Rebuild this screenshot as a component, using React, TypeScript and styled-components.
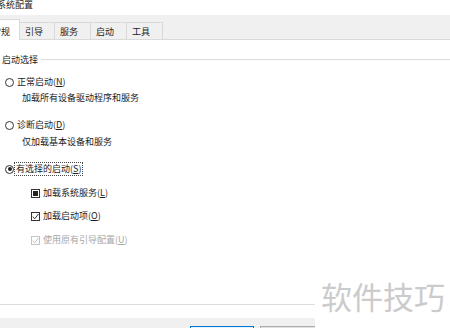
import React from "react";
import styled, { createGlobalStyle } from "styled-components";

const GlobalStyle = createGlobalStyle`
  html, body {
    margin: 0;
    padding: 0;
    background: #fff;
  }
  body {
    overflow: hidden;
    font-family: "Noto Sans CJK SC", "Noto Sans", sans-serif;
  }
`;

const Window = styled.div`
  position: relative;
  width: 450px;
  height: 328px;
  display: flex;
  flex-direction: column;
  overflow: hidden;
  background: #fff;
  color: #1c1c1c;
  font-size: 9px;
`;

const TitleBar = styled.div`
  height: 15px;
  line-height: 10px;
  margin-left: -3px;
  white-space: nowrap;
`;

const TabStrip = styled.div`
  display: flex;
  align-items: flex-end;
  height: 24px;
  background: #f0f0f0;
  border-bottom: 1px solid #d9d9d9;
`;

const Tab = styled.div<{ $w: number; $active?: boolean }>`
  box-sizing: border-box;
  width: ${({ $w }) => $w}px;
  height: ${({ $active }) => ($active ? 21 : 17)}px;
  margin-left: ${({ $active }) => ($active ? -14 : -1)}px;
  margin-bottom: ${({ $active }) => ($active ? -1 : 0)}px;
  padding: ${({ $active }) => ($active ? "5px 0 0 5px" : "2px 0 0 5px")};
  line-height: 14px;
  border: 1px solid #d9d9d9;
  border-bottom: none;
  background: ${({ $active }) => ($active ? "#fff" : "#f0f0f0")};
  white-space: nowrap;
  position: relative;
  z-index: ${({ $active }) => ($active ? 1 : 0)};
`;

const Panel = styled.div`
  flex: 1;
  display: flex;
  flex-direction: column;
  margin-bottom: 13px;
`;

const GroupHeader = styled.div`
  display: flex;
  margin-top: 15px;
  height: 10px;
  line-height: 10px;
  padding-left: 2px;
`;

const GroupLine = styled.div`
  flex: 1;
  height: 1px;
  margin: 4px 0 0 3px;
  background: #dcdcdc;
`;

const Row = styled.div<{ $indent: number; $mt: number; $disabled?: boolean }>`
  display: flex;
  align-items: center;
  gap: 3px;
  height: 12px;
  line-height: 12px;
  margin-top: ${({ $mt }) => $mt}px;
  padding-left: ${({ $indent }) => $indent}px;
  color: ${({ $disabled }) => ($disabled ? "#a8a8a8" : "inherit")};
  white-space: nowrap;
`;

const Label = styled.span<{ $focus?: boolean }>`
  ${({ $focus }) =>
    $focus &&
    `
    border: 1px dotted #444;
    margin-left: -3px;
    padding: 0 1px 0 1px;
    line-height: 12px;
  `}
`;

const RadioDot = styled.span<{ $checked?: boolean }>`
  position: relative;
  box-sizing: border-box;
  width: 9px;
  height: 9px;
  border: 1px solid #333;
  border-radius: 50%;
  flex-shrink: 0;
  &::after {
    content: "";
    display: ${({ $checked }) => ($checked ? "block" : "none")};
    position: absolute;
    left: 1.5px;
    top: 1.5px;
    width: 4px;
    height: 4px;
    border-radius: 50%;
    background: #222;
  }
`;

const CheckBox = styled.span<{ $mixed?: boolean; $disabled?: boolean }>`
  position: relative;
  box-sizing: border-box;
  width: 9px;
  height: 9px;
  border: 1px solid ${({ $disabled }) => ($disabled ? "#c4c4c4" : "#333")};
  flex-shrink: 0;
  svg {
    position: absolute;
    left: -1px;
    top: -1px;
  }
  &::after {
    content: "";
    display: ${({ $mixed }) => ($mixed ? "block" : "none")};
    position: absolute;
    left: 1px;
    top: 1px;
    width: 5px;
    height: 5px;
    background: #222;
  }
`;

const Spacer = styled.div`
  flex: 1;
`;

const Divider = styled.div`
  height: 1px;
  background: #dcdcdc;
`;

const Footer = styled.div`
  display: flex;
  gap: 6px;
  height: 10px;
  padding: 8px 0 0 190px;
  box-sizing: border-box;
  background: #f0f0f0;
`;

const Button = styled.div<{ $primary?: boolean }>`
  box-sizing: border-box;
  width: 64px;
  height: 20px;
  flex-shrink: 0;
  border: 1px solid ${({ $primary }) => ($primary ? "#0078d7" : "#adadad")};
  background: ${({ $primary }) => ($primary ? "#e5f1fb" : "#e1e1e1")};
  text-align: center;
  line-height: 18px;
`;

const Watermark = styled.div`
  position: absolute;
  right: 0;
  bottom: 0;
  width: 135px;
  height: 56px;
  box-sizing: border-box;
  padding: 8px 0 0 6px;
  background: #fff;
  color: #cbcbcb;
  font-size: 31px;
  line-height: 31px;
  white-space: nowrap;
`;

const Check = ({ color = "#333" }: { color?: string }) => (
  <svg width="9" height="9" viewBox="0 0 9 9">
    <path d="M1.8 4.6 L3.7 6.8 L7.6 1.9" fill="none" stroke={color} strokeWidth="1" />
  </svg>
);

const App: React.FC = () => {
  return (
    <Window>
      <GlobalStyle />
      <TitleBar>系统配置</TitleBar>
      <TabStrip>
        <Tab $w={34} $active>
          常规
        </Tab>
        <Tab $w={36}>引导</Tab>
        <Tab $w={37}>服务</Tab>
        <Tab $w={37}>启动</Tab>
        <Tab $w={37}>工具</Tab>
      </TabStrip>
      <Panel>
        <GroupHeader>
          启动选择
          <GroupLine />
        </GroupHeader>

        <Row $indent={5} $mt={11}>
          <RadioDot />
          <Label>
            正常启动(<u>N</u>)
          </Label>
        </Row>
        <Row $indent={22} $mt={4}>
          加载所有设备驱动程序和服务
        </Row>

        <Row $indent={5} $mt={15}>
          <RadioDot />
          <Label>
            诊断启动(<u>D</u>)
          </Label>
        </Row>
        <Row $indent={22} $mt={5}>
          仅加载基本设备和服务
        </Row>

        <Row $indent={5} $mt={15}>
          <RadioDot $checked />
          <Label $focus>
            有选择的启动(<u>S</u>)
          </Label>
        </Row>

        <Row $indent={31} $mt={12}>
          <CheckBox $mixed />
          <Label>
            加载系统服务(<u>L</u>)
          </Label>
        </Row>
        <Row $indent={31} $mt={11}>
          <CheckBox>
            <Check />
          </CheckBox>
          <Label>
            加载启动项(<u>O</u>)
          </Label>
        </Row>
        <Row $indent={31} $mt={12} $disabled>
          <CheckBox $disabled>
            <Check color="#bdbdbd" />
          </CheckBox>
          <Label>
            使用原有引导配置(<u>U</u>)
          </Label>
        </Row>

        <Spacer />
        <Divider />
      </Panel>
      <Footer>
        <Button $primary>确定</Button>
        <Button>取消</Button>
      </Footer>
      <Watermark>软件技巧</Watermark>
    </Window>
  );
};

export default App;
